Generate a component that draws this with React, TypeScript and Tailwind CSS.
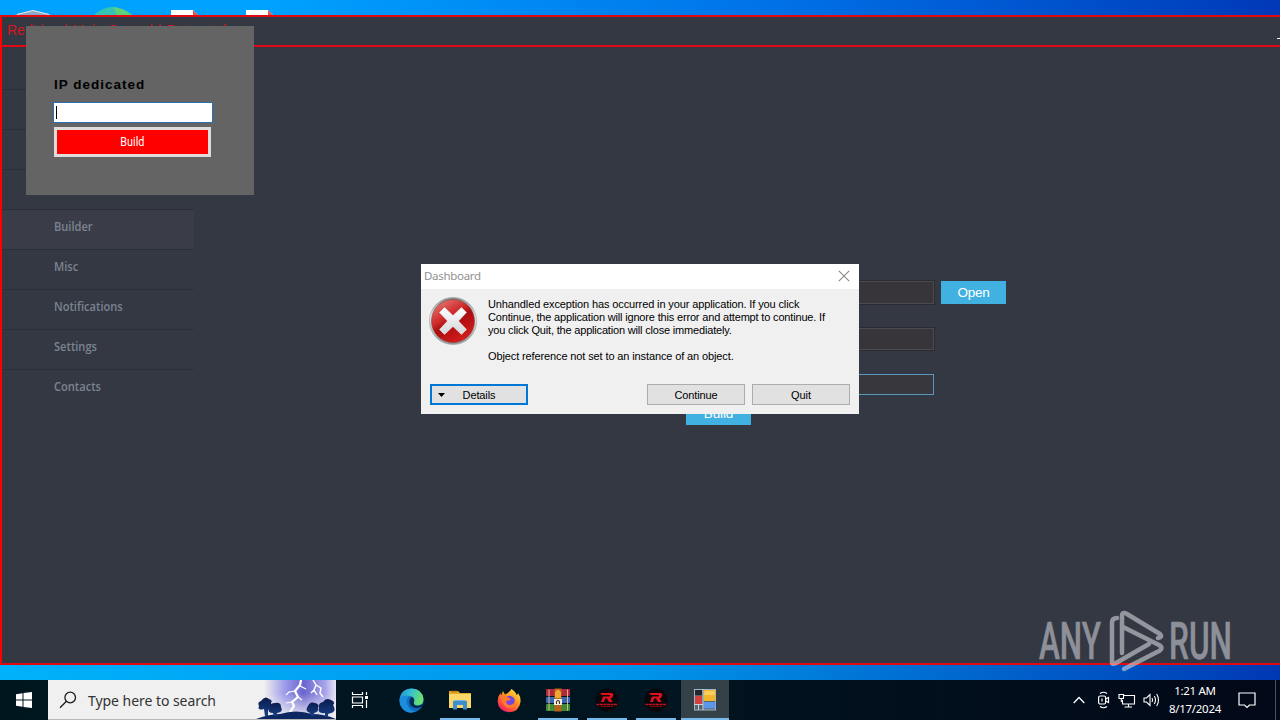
import type { ReactNode } from "react";
import clsx from "clsx";

const menuItems = ["", "", "", "", "Builder", "Misc", "Notifications", "Settings", "Contacts"];

const DesktopIcons = () => (
  <svg className="block" width="320" height="15" viewBox="0 0 320 15">
    <path d="M14 15 L33 10 L52 15 Z" fill="#8fa9c4" />
    <path d="M17 14.500 L33 10.500 L49 14.500" stroke="#dfe9f2" fill="none" />
    <path d="M94 15 Q112 -1 132 15 Z" fill="#35c3b4" />
    <path d="M113 7 Q124 8 132 15 H117 Z" fill="#5fd07a" />
    <path d="M171 15 V10 H193 L198 15 Z" fill="#fff" />
    <path d="M193 10 L198 15 H193 Z" fill="#d9584d" />
    <path d="M246 15 V10 H268 L273 15 Z" fill="#fff" />
    <path d="M268 10 L273 15 H268 Z" fill="#d9584d" />
  </svg>
);

const Sidebar = () => (
  <nav className="w-[192px] pt-[3px] font-['Open_Sans',sans-serif] text-[12px] font-semibold text-[#7b8491]">
    {menuItems.map((item, i) => (
      <div
        key={i}
        className={clsx(
          "h-[40px] border-b border-b-[#2b2f38] pl-[52px] pt-[9px] leading-[16px]",
          item === "Builder" && "bg-[#3a3d47]",
          item === "Contacts" && "border-b-transparent"
        )}
      >
        <span className="inline-block origin-left scale-x-[0.925]">{item}</span>
      </div>
    ))}
  </nav>
);

const BuilderForm = () => (
  <div className="flex flex-col pl-[307px] pt-[234px] font-['Liberation_Sans',sans-serif] text-[13.5px] text-white">
    <div className="flex gap-[7px]">
      <div className="h-[23px] w-[433px] border border-[#4b4a4d] bg-[#38353a] outline outline-[#2b2b31]" />
      <div className="flex h-[23px] w-[65px] items-center justify-center bg-[#41b1e1] pt-[2px] tracking-[-0.3px]">
        Open
      </div>
    </div>
    <div className="mt-[24px] h-[22px] w-[433px] border border-[#4b4a4d] bg-[#38353a] outline outline-[#2b2b31]" />
    <div className="mt-[24px] h-[21px] w-[433px] border border-[#5f95b5] bg-[#38373d] outline outline-[#2b3a4b]" />
    <div className="ml-[185px] mt-[7px] flex h-[23px] w-[65px] items-center justify-center bg-[#41b1e1] pt-[2px] tracking-[-0.1px]">
      Build
    </div>
  </div>
);

const DedicatedPanel = () => (
  <div className="absolute left-[26px] top-[26px] flex h-[169px] w-[228px] flex-col bg-[#646464] pl-[27px] pt-[51px] font-['Liberation_Sans',sans-serif]">
    <div className="pl-[1px] text-[13.5px] font-bold leading-[16px] tracking-[1px] text-black">IP dedicated</div>
    <div className="mt-[9px] flex h-[21px] w-[160px] items-center border border-[#2a70b0] bg-white pl-[2px]">
      <div className="h-[13px] w-px bg-black" />
    </div>
    <div className="ml-[1px] mt-[4px] flex h-[30px] w-[157px] items-center justify-center border-[3px] border-[#e0dcdc] bg-[#ff0000] font-['Roboto',sans-serif] text-[12px] text-white">
      <span className="scale-x-[0.9]">Build</span>
    </div>
  </div>
);

const ErrorIcon = () => (
  <svg width="50" height="50" viewBox="0 0 50 50">
    <defs>
      <linearGradient id="rim" x1="0" y1="0" x2="0" y2="1">
        <stop offset="0" stopColor="#7d8c88" />
        <stop offset="0.4" stopColor="#e6eaea" />
        <stop offset="1" stopColor="#8d9694" />
      </linearGradient>
      <linearGradient id="ball" x1="0" y1="0" x2="0.6" y2="1">
        <stop offset="0" stopColor="#e58a86" />
        <stop offset="0.45" stopColor="#cf2a2a" />
        <stop offset="0.6" stopColor="#a80d10" />
        <stop offset="1" stopColor="#d41c1c" />
      </linearGradient>
      <linearGradient id="cross" x1="0" y1="0" x2="0" y2="1">
        <stop offset="0" stopColor="#ffffff" />
        <stop offset="1" stopColor="#d2d8dc" />
      </linearGradient>
    </defs>
    <circle cx="25" cy="25" r="23.600" fill="url(#rim)" stroke="#98a19f" strokeWidth="0.600" />
    <circle cx="25" cy="25" r="21.500" fill="url(#ball)" stroke="#a03030" strokeWidth="0.600" />
    <path
      d="M16.500 11.500 L25 19.500 L33.500 11.500 L38.500 16.500 L30.500 25 L38.500 33.500 L33.500 38.500 L25 30.500 L16.500 38.500 L11.500 33.500 L19.500 25 L11.500 16.500 Z"
      fill="url(#cross)"
      stroke="#f2f2f2"
      strokeWidth="0.500"
      strokeLinejoin="round"
    />
  </svg>
);

const DialogButton = ({ children, focused }: { children: ReactNode; focused?: boolean }) => (
  <div
    className={clsx(
      "relative flex h-[21px] w-[98px] items-center justify-center bg-[#e1e1e1] pt-px tracking-[-0.1px]",
      focused ? "border-2 border-[#0078d7]" : "border border-[#adadad]"
    )}
  >
    {children}
  </div>
);

const ErrorDialog = () => (
  <div className="absolute left-[421px] top-[264px] flex h-[150px] w-[438px] flex-col bg-[#f0f0f0] font-['Liberation_Sans',sans-serif] text-[11px] text-black">
    <div className="flex h-[25px] items-center justify-between bg-white pl-[3px] pr-[9px]">
      <span className="-mt-[2px] font-['Noto_Sans',sans-serif] text-[11.5px] tracking-[-0.3px] text-[#929292]">
        Dashboard
      </span>
      <svg className="-mt-px" width="12" height="12" viewBox="0 0 12 12">
        <path d="M0.800 0.800 L11.200 11.200 M11.200 0.800 L0.800 11.200" stroke="#8a8a8a" strokeWidth="1.100" />
      </svg>
    </div>
    <div className="flex h-[95px] pl-[7px] pt-[7px]">
      <ErrorIcon />
      <div className="ml-[10px] pt-[2px] leading-[13px] whitespace-nowrap">
        <p className="tracking-[-0.12px]">Unhandled exception has occurred in your application. If you click</p>
        <p className="tracking-[-0.17px]">Continue, the application will ignore this error and attempt to continue. If</p>
        <p className="tracking-[-0.18px]">you click Quit, the application will close immediately.</p>
        <p className="mt-[13px] tracking-[-0.12px]">Object reference not set to an instance of an object.</p>
      </div>
    </div>
    <div className="flex px-[9px]">
      <DialogButton focused>
        <svg className="absolute left-[6px] top-[7px]" width="7" height="4" viewBox="0 0 7 4">
          <path d="M0 0 H7 L3.500 4 Z" fill="#000" />
        </svg>
        Details
      </DialogButton>
      <div className="ml-auto flex gap-[7px]">
        <DialogButton>Continue</DialogButton>
        <DialogButton>Quit</DialogButton>
      </div>
    </div>
  </div>
);

const Watermark = () => (
  <svg className="absolute left-[1034px] top-[604px] opacity-60" width="240" height="76" viewBox="0 0 240 76">
    <g fill="#c9cbd1" stroke="#c9cbd1" strokeWidth="0.500" fontFamily="Roboto, sans-serif" fontSize="52" fontWeight="500">
      <text x="5" y="55" textLength="62" lengthAdjust="spacingAndGlyphs">ANY</text>
      <text x="135" y="55" textLength="63" lengthAdjust="spacingAndGlyphs">RUN</text>
    </g>
    <g fill="none" stroke="#d3d5da" strokeWidth="4.500" strokeLinejoin="round" strokeLinecap="round">
      <path d="M83 14 Q78 14 78 19 V58 Q78 61 82 59 L115 40" />
      <path d="M88 49 V12 Q88 7 93 10 L126 30 Q129 33 124 34" />
      <path d="M89 23 L125 41 Q130 44 125 47 L90 65" />
    </g>
  </svg>
);

const SearchArt = () => (
  <svg className="block" width="80" height="39" viewBox="0 0 80 39">
    <defs>
      <linearGradient id="storm" x1="0" y1="0" x2="1" y2="0">
        <stop offset="0" stopColor="#f0f0f0" />
        <stop offset="0.300" stopColor="#9a98e8" />
        <stop offset="0.550" stopColor="#6b66cf" />
        <stop offset="0.850" stopColor="#a7a4ea" />
        <stop offset="1" stopColor="#e6e5f6" />
      </linearGradient>
      <linearGradient id="fade" x1="0" y1="0" x2="0" y2="1">
        <stop offset="0.350" stopColor="#f0f0f0" stopOpacity="0" />
        <stop offset="1" stopColor="#f0f0f0" />
      </linearGradient>
      <linearGradient id="tree" x1="0" y1="0" x2="0" y2="1">
        <stop offset="0" stopColor="#0b1c4d" />
        <stop offset="1" stopColor="#173f86" />
      </linearGradient>
    </defs>
    <rect x="8" width="72" height="39" fill="url(#storm)" />
    <rect x="8" width="72" height="39" fill="url(#fade)" />
    <g stroke="#fff" fill="none" strokeLinejoin="round">
      <path d="M45 0 L44 5 L39 11 L42 17 L36 22 L38 26 L34 32" strokeWidth="2.200" />
      <path d="M39 11 L33 12 L30 15 M42 17 L46 20 M36 22 L30 23 M44 6 L50 9" strokeWidth="1.200" />
      <path d="M57 0 L60 5 L58 10 L61 15 M60 5 L65 8 L64 13 L67 17 M58 10 L55 13" strokeWidth="1.400" />
    </g>
    <path d="M0 39 Q14 34 24 34 Q40 29 56 34 Q68 34 80 39 Z" fill="#0d2763" />
    <g fill="url(#tree)">
      <path d="M8 29 Q1 31 3 26 Q1 22 5 21 Q9 15 13 19 Q17 20 15 23 Q18 28 12 30 L12 36 H9 Z" />
      <path d="M17 33 Q11 33 13 28 Q14 23 19 23 Q25 22 25 27 Q28 32 21 33 V36 H18 Z" />
      <path d="M54 33 Q48 31 52 26 Q54 21 59 23 Q64 24 62 28 Q63 32 58 33 V36 H55 Z" />
      <path d="M69 33 Q61 34 63 28 Q62 23 67 22 Q70 17 75 20 Q80 22 77 25 Q81 31 75 33 L72 34 V37 H69 Z" />
    </g>
  </svg>
);

const TaskViewIcon = () => (
  <svg width="18" height="16" viewBox="0 0 18 16" fill="none" stroke="#fff" strokeWidth="1.200">
    <path d="M1.500 0 V2.500 H11.500 V0 M1.500 16 V13.500 H11.500 V16 M1.500 5 H11.500 V11 H1.500 Z M15.500 0 V3 M15.500 8 V16" />
    <path d="M14 4 H17 V7 H14 Z" fill="#fff" stroke="none" />
  </svg>
);

const EdgeIcon = () => (
  <svg width="25" height="25" viewBox="0 0 25 25">
    <defs>
      <linearGradient id="edgeTop" x1="0" y1="0" x2="1" y2="0.300">
        <stop offset="0" stopColor="#1c8bd8" />
        <stop offset="0.500" stopColor="#35c1cf" />
        <stop offset="1" stopColor="#6be070" />
      </linearGradient>
    </defs>
    <circle cx="12.500" cy="12.500" r="12" fill="#0f6cbf" />
    <path d="M0.600 11 Q2 0.500 12.500 0.500 Q23.500 1 24.500 11 Q24.500 17 18 17.500 Q14 17 15 14 Q16.500 9 11 8 Q4 7 0.600 11 Z" fill="url(#edgeTop)" />
    <path d="M0.600 11 Q4 6.500 11 8 Q6 11 8.500 17 Q11 23 17 23.500 Q8 27 3 20 Q0 16 0.600 11 Z" fill="#1b8ddd" />
    <path d="M15 14 Q14 17 18 17.700 Q21 18 23.500 16 L23 18.500 Q16 22 12 18 Q8.500 13 12.500 9 Q16 10 15 14 Z" fill="#072d55" />
  </svg>
);

const ExplorerIcon = () => (
  <svg width="22" height="20" viewBox="0 0 22 20">
    <path d="M0 1 H9 L11 3 H22 V18 H0 Z" fill="#e3a928" />
    <path d="M0 4 H22 V18 H0 Z" fill="#fbd767" />
    <path d="M2 1.500 H8" stroke="#c87916" strokeWidth="1.500" />
    <path d="M4 19.500 V12 Q4 10.500 5.500 10.500 H16.500 Q18 10.500 18 12 V19.500 H14 V15 H8 V19.500 Z" fill="#3d8fd0" />
    <path d="M5.500 10.500 H16.500" stroke="#72b6e6" />
  </svg>
);

const FirefoxIcon = () => (
  <svg width="24" height="25" viewBox="0 0 24 25">
    <defs>
      <linearGradient id="fox" x1="0.900" y1="0" x2="0.200" y2="1">
        <stop offset="0" stopColor="#fff04b" />
        <stop offset="0.400" stopColor="#ff9a20" />
        <stop offset="0.750" stopColor="#ff4a3f" />
        <stop offset="1" stopColor="#e7157b" />
      </linearGradient>
    </defs>
    <path d="M14.500 1 Q19 4 19.500 7 Q21 6.500 21 5 Q24 9 23.500 14 Q22 24 12 24.200 Q1.500 23.500 0.700 14 Q0.500 8.500 3.500 5 L4 7.500 L6 3 L8 6.500 Q12 5 14.500 1 Z" fill="url(#fox)" />
    <circle cx="12.500" cy="13" r="5.300" fill="#7445e0" />
    <path d="M4 8 Q8 6.500 11 9.500 L14 11 Q12 13.500 9.500 12.500 Q8.500 17 13 17 Q17 16.500 18 13 Q19 21 11 20 Q4.500 18 4 8 Z" fill="#ff7a2b" />
  </svg>
);

const WinRarIcon = () => (
  <svg width="26" height="24" viewBox="0 0 26 24">
    <rect x="1" y="1" width="24" height="7" rx="1" fill="#b3283c" />
    <rect x="1" y="9" width="24" height="6" rx="1" fill="#3c66b8" />
    <rect x="1" y="16" width="24" height="7" rx="1" fill="#3f8a36" />
    <path d="M4 1.500 V22.500 M22.500 1.500 V22.500" stroke="#d9c98a" strokeWidth="0.900" />
    <rect x="9.500" y="0.500" width="7" height="23" fill="#b8621b" />
    <path d="M10 4 Q13 -1 16 4 V10 H10 Z" fill="#efa82e" />
    <rect x="9" y="11" width="8" height="6" fill="#f1eee2" />
    <path d="M11.500 16 V13.500 Q13 11.500 14.500 13.500 V16" stroke="#4b3522" strokeWidth="1.100" fill="none" />
  </svg>
);

const RedlineIcon = () => (
  <svg width="24" height="24" viewBox="0 0 24 24">
    <circle cx="12" cy="12" r="11.500" fill="#08080c" />
    <path d="M5 5 H16 Q19 5 18 8 Q17.500 10 15.500 10.500 L17.500 14 H14 L12 10.500 H10 L9 14 H6 L8 8.500 H14.500 L15 7 H7 Z" fill="#e0101c" />
    <path d="M1.500 16.500 H22.500" stroke="#c50f1b" strokeWidth="1.500" strokeDasharray="3 0.500" />
    <path d="M6 18.500 H18" stroke="#6d0b12" strokeWidth="1" />
  </svg>
);

const WinFormsIcon = () => (
  <svg width="22" height="22" viewBox="0 0 22 22">
    <rect x="0.500" y="0.500" width="21" height="20.500" fill="#59636b" stroke="#9fb6c4" />
    <rect x="1" y="1" width="7" height="5" fill="#23272c" />
    <rect x="1" y="7" width="7" height="8" fill="#d4403d" />
    <rect x="9.500" y="1" width="12" height="11" fill="#f0b72c" />
    <rect x="10.500" y="2" width="10" height="4" fill="#f7cf62" />
    <rect x="9.500" y="13" width="12" height="6.500" fill="#5b96e8" />
    <path d="M0 15.500 H9 M4.500 15.500 V21 M9 0 V21" stroke="#c6d6df" />
  </svg>
);

const apps = [
  { icon: <EdgeIcon />, open: false },
  { icon: <ExplorerIcon />, open: true },
  { icon: <FirefoxIcon />, open: false },
  { icon: <WinRarIcon />, open: true },
  { icon: <RedlineIcon />, open: true },
  { icon: <RedlineIcon />, open: true },
  { icon: <WinFormsIcon />, open: true, active: true },
];

const TrayIcons = () => (
  <div className="flex items-center">
    <svg width="12" height="8" viewBox="0 0 12 8">
      <path d="M0.700 7 L6 1.500 L11.300 7" stroke="#fff" strokeWidth="1.300" fill="none" />
    </svg>
    <svg className="ml-[12px]" width="14" height="18" viewBox="0 0 14 18" fill="none" stroke="#fff" strokeWidth="1.200">
      <path d="M3 2.500 Q6.500 0 10 2.500 M3 15.500 Q6.500 18 10 15.500" />
      <rect x="1.600" y="5" width="7" height="8" rx="1.500" />
      <path d="M8.600 8 L11.500 6.500 V11.500 L8.600 10 M5 7.500 V10.500" />
    </svg>
    <svg className="ml-[7px]" width="18" height="15" viewBox="0 0 18 15" fill="none" stroke="#fff" strokeWidth="1.100">
      <path d="M6 2.500 H16.500 V11 H4.500 V7 M10.500 11 V14 M6.500 14 H14" />
      <path d="M1 1.500 H5.500 V5.500 H1 Z M3.300 5.500 V9" />
    </svg>
    <svg className="ml-[7px]" width="18" height="14" viewBox="0 0 18 14" fill="none" stroke="#fff" strokeWidth="1.100">
      <path d="M1 5 H3.500 L7 1.500 V12.500 L3.500 9 H1 Z M9 5 Q10.300 7 9 9 M11.300 3 Q13.700 7 11.300 11 M13.700 1 Q17.300 7 13.700 13" />
    </svg>
  </div>
);

const Taskbar = () => (
  <div className="flex h-[40px] bg-linear-to-r from-[#00161f] via-[#011520] to-[#020817] text-white">
    <div className="flex w-[48px] items-center justify-center">
      <svg width="16" height="16" viewBox="0 0 16 16" fill="#fff">
        <path d="M0 2.200 L6.500 1.300 V7.500 H0 Z M7.500 1.100 L16 0 V7.500 H7.500 Z M0 8.500 H6.500 V14.700 L0 13.800 Z M7.500 8.500 H16 V16 L7.500 14.900 Z" />
      </svg>
    </div>
    <div className="flex w-[288px] items-center border-b border-[#b8b8b8] bg-[#f0f0f0]">
      <svg className="ml-[11px]" width="18" height="18" viewBox="0 0 18 18" fill="none" stroke="#1b1b1b" strokeWidth="1.300">
        <circle cx="11.200" cy="6.500" r="5.300" />
        <path d="M7.400 10.300 L1 16.700" />
      </svg>
      <span className="ml-[11px] pt-[2px] font-['Noto_Sans',sans-serif] text-[14px] tracking-[-0.05px] whitespace-nowrap text-[#333]">
        Type here to search
      </span>
      <div className="ml-auto">
        <SearchArt />
      </div>
    </div>
    <div className="flex w-[48px] items-center justify-center">
      <TaskViewIcon />
    </div>
    <div className="ml-[3px] flex gap-px">
      {apps.map((app, i) => (
        <div key={i} className={clsx("flex w-[48px] flex-col items-center", app.active && "bg-[#354149]")}>
          <div className="flex h-[38px] items-center pt-[2px]">{app.icon}</div>
          {app.open && <div className={clsx("h-[2px] bg-[#76b9ed]", app.active ? "w-full" : "w-[40px]")} />}
        </div>
      ))}
    </div>
    <div className="ml-auto flex items-center">
      <TrayIcons />
      <div className="ml-[7px] w-[54px] text-center font-['Noto_Sans',sans-serif] text-[11.5px] leading-[18px] tracking-[-0.3px] whitespace-nowrap">
        <div>1:21 AM</div>
        <div>8/17/2024</div>
      </div>
      <svg className="ml-[16px]" width="18" height="17" viewBox="0 0 18 17">
        <path d="M1 1 H17 V13 H11.500 L9 15.500 L6.500 13 H1 Z" fill="none" stroke="#fff" strokeWidth="1.200" />
      </svg>
      <div className="ml-[19px] mr-[4px] h-[40px] w-px bg-[#4b5360]" />
    </div>
  </div>
);

export default function App() {
  return (
    <div className="relative flex h-[720px] w-[1280px] flex-col overflow-hidden bg-[#343842]">
      <div className="h-[15px] bg-linear-to-r from-[#00a2ff] from-20% via-[#0072e8] via-60% to-[#0038b8]">
        <DesktopIcons />
      </div>
      <main className="flex h-[650px] flex-col border-y-2 border-l-2 border-y-[#e00812] border-l-[#ff0000]">
        <header className="flex h-[30px] items-center justify-between border-b-2 border-[#e00812] pl-[5px] font-['Liberation_Sans',sans-serif] text-[14px] text-[#d8141c]">
          <span className="-mt-[1px] [word-spacing:1px]">RedLine | Main Control | Protected</span>
          <span className="mt-[14px] h-px w-[3px] bg-white" />
        </header>
        <div className="flex flex-1">
          <Sidebar />
          <BuilderForm />
        </div>
      </main>
      <div className="h-[15px] bg-linear-to-r from-[#00b2fb] via-[#0094e8] via-50% to-[#0038b4]" />
      <Taskbar />
      <DedicatedPanel />
      <ErrorDialog />
      <Watermark />
    </div>
  );
}
